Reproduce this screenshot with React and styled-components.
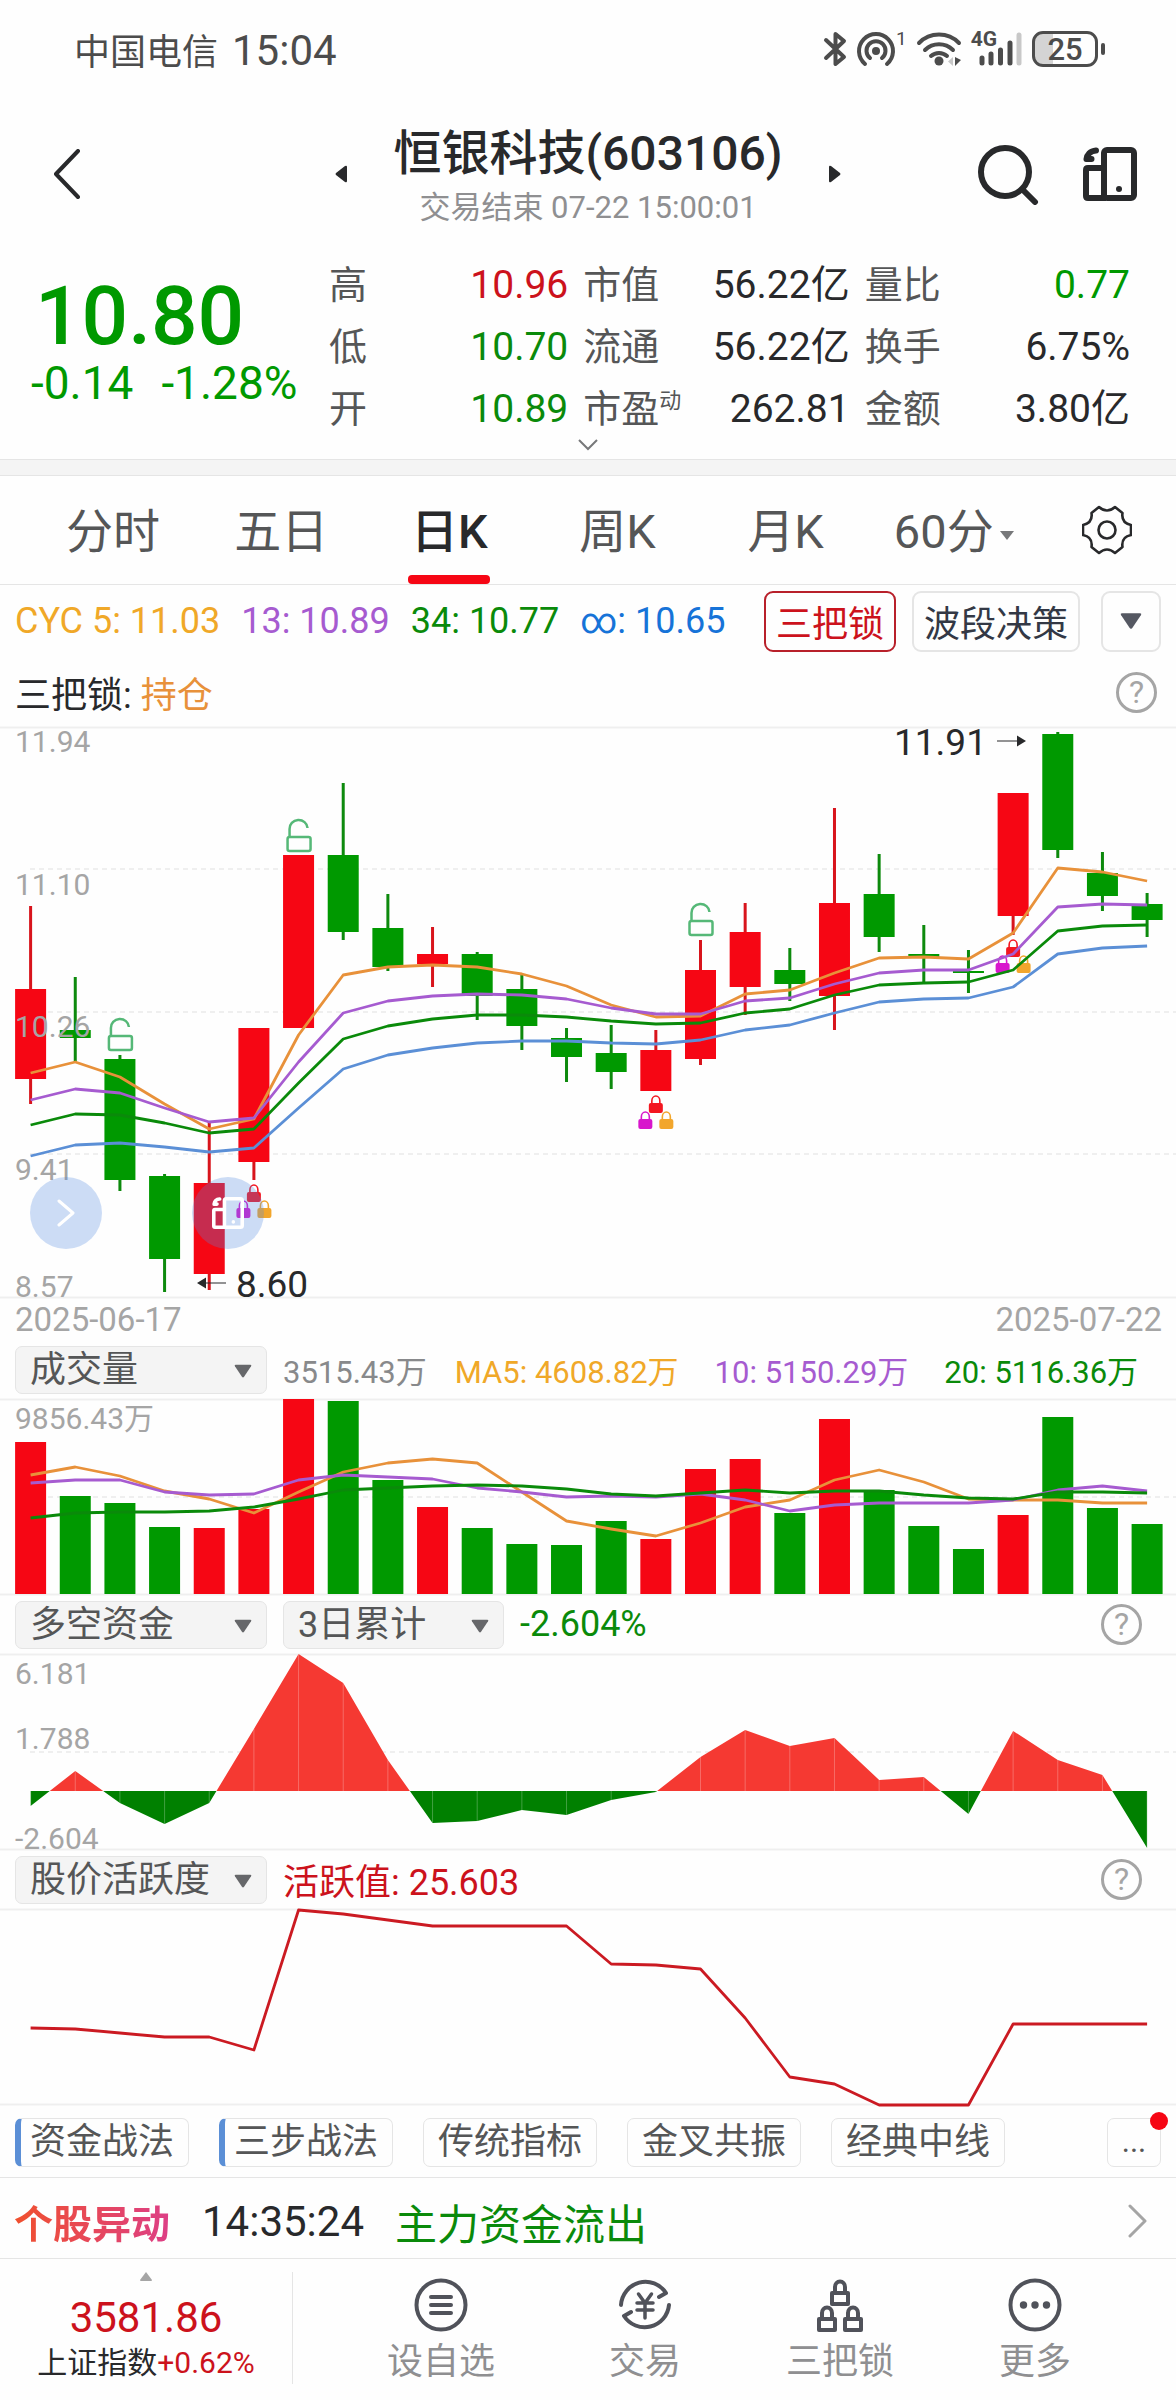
import React from 'react';
import styled, { createGlobalStyle } from 'styled-components';

const RED = '#f60614';
const GREEN = '#009900';
const DARK_RED = '#cc121c';
const DARK_GREEN = '#0a8a0a';
const ORANGE = '#e8913a';
const AMBER = '#f0a828';
const PURPLE = '#a65bd0';
const BLUE = '#5b8fd6';
const INK = '#28292b';
const GREY = '#555657';
const LIGHT = '#a5a5a5';
const LINE = '#e5e5e5';

const GlobalStyle = createGlobalStyle`
  * {
    box-sizing: border-box;
  }
  body {
    margin: 0;
    background: #fefefe;
    color: ${INK};
    font-family: Roboto, 'Noto Sans CJK SC', sans-serif;
  }
  button, select {
    margin: 0;
    padding: 0;
    border: none;
    background: none;
    color: inherit;
    font: inherit;
    cursor: pointer;
  }
  a {
    color: inherit;
    text-decoration: none;
  }
  svg {
    display: block;
    flex-shrink: 0;
  }
`;

const Page = styled.div`
  width: 100%;
  overflow: hidden;
  white-space: nowrap;
`;

/* status bar */

const StatusBar = styled.div`
  display: flex;
  align-items: center;
  justify-content: space-between;
  height: 100px;
  padding: 0 71px 2px 74px;
  color: #4c4c4c;
`;

const Carrier = styled.div`
  display: flex;
  align-items: baseline;
  gap: 14px;
  font-size: 36px;
`;

const Clock = styled.span`
  font-size: 42px;
`;

const StatusIcons = styled.div`
  display: flex;
  align-items: center;
  gap: 9px;
`;

const IconGroup = styled.div`
  display: flex;
  align-items: flex-start;
`;

const TinyText = styled.span`
  font-size: ${(p) => p.$size}px;
  line-height: 16px;
  font-weight: ${(p) => p.$weight || 400};
`;

const Battery = styled.div`
  display: flex;
  align-items: center;
  gap: 3px;
`;

const BatteryBody = styled.div`
  width: 66px;
  height: 36px;
  border: 3px solid #4c4c4c;
  border-radius: 11px;
  background: linear-gradient(90deg, #d4d4d4 18px, transparent 18px);
  font-size: 31px;
  font-weight: 500;
  line-height: 31px;
  text-align: center;
`;

const BatteryTip = styled.div`
  width: 4px;
  height: 12px;
  border-radius: 2px;
  background: #4c4c4c;
`;

/* title bar */

const Header = styled.header`
  display: grid;
  grid-template-columns: 1fr auto 1fr;
  align-items: center;
  height: 148px;
  padding: 0 39px 0 53px;
`;

const IconButton = styled.button`
  display: flex;
  align-items: center;
`;

const StockPicker = styled.div`
  display: flex;
  align-items: center;
  gap: 45px;
  margin-left: -14px;
`;

const StockTitle = styled.div`
  padding-top: 2px;
  text-align: center;
`;

const StockName = styled.h1`
  margin: 0;
  font-size: 48px;
  font-weight: 500;
  line-height: 62px;
`;

const StockState = styled.p`
  margin: 0;
  padding-top: 3px;
  color: #8f8f91;
  font-size: 31px;
  line-height: 40px;
`;

const HeaderActions = styled.div`
  display: flex;
  align-items: center;
  justify-content: flex-end;
  gap: 44px;
`;

/* quote */

const Quote = styled.section`
  display: flex;
  height: 190px;
  padding: 4px 46px 0 31px;
`;

const PriceBlock = styled.div`
  flex: 0 0 298px;
  padding-top: 22px;
  color: ${GREEN};
`;

const Price = styled.div`
  padding-left: 4px;
  font-size: 82px;
  font-weight: 500;
  line-height: 84px;
`;

const Change = styled.div`
  display: flex;
  gap: 28px;
  font-size: 46px;
  line-height: 50px;
`;

const QuoteGrid = styled.dl`
  display: grid;
  flex: 1;
  grid-template-columns: 239fr 266fr 265fr;
  grid-auto-rows: 62px;
  column-gap: 15px;
  margin: 0;
  padding-top: 2px;
`;

const QuoteItem = styled.div`
  display: flex;
  align-items: center;
  justify-content: space-between;
  font-size: 38px;
  line-height: 62px;

  dt {
    color: ${GREY};
  }
  dd {
    margin: 0;
    color: ${(p) => p.$color || INK};
    font-size: 39px;
  }
  sup {
    font-size: 22px;
    line-height: 22px;
    vertical-align: 14px;
  }
`;

const ExpandButton = styled.button`
  display: flex;
  justify-content: center;
  width: 100%;
  height: 21px;
`;

const Band = styled.div`
  height: 17px;
  border: solid ${LINE};
  border-width: 1px 0;
  background: #f4f4f4;
`;

/* period tabs */

const Tabs = styled.nav`
  display: flex;
  align-items: stretch;
  height: 109px;
  padding: 0 0 0 29px;
  border-bottom: 1px solid ${LINE};
`;

const Tab = styled.button`
  position: relative;
  flex: 168;
  padding-bottom: 5px;
  color: ${(p) => (p.$active ? INK : GREY)};
  font-size: 47px;
  font-weight: ${(p) => (p.$active ? 500 : 400)};

  &::after {
    content: '';
    display: ${(p) => (p.$active ? 'block' : 'none')};
    position: absolute;
    bottom: 0;
    left: calc(50% - 41px);
    width: 82px;
    height: 9px;
    border-radius: 4px;
    background: ${RED};
  }
`;

const TabCaret = styled.span`
  display: inline-block;
  margin-left: 6px;
  border: 7px solid transparent;
  border-top: 9px solid #77787a;
  border-bottom: 0;
  vertical-align: 8px;
`;

const Settings = styled.button`
  display: flex;
  flex: 138;
  align-items: center;
  justify-content: center;
`;

/* main indicator rows */

const Row = styled.div`
  display: flex;
  align-items: center;
  height: ${(p) => p.$height}px;
  padding: 0 ${(p) => p.$right}px 0 15px;
  font-size: 36px;
`;

const Legend = styled.div`
  display: flex;
  flex: 1;
  gap: 21px;
`;

const Tinted = styled.span`
  color: ${(p) => p.$color};
`;

const StrategyButton = styled.button`
  height: 61px;
  margin-left: 16px;
  padding: 0 10px;
  border: 2px solid ${(p) => (p.$active ? '#b8202a' : LINE)};
  border-radius: 9px;
  color: ${(p) => (p.$active ? DARK_RED : '#333845')};
`;

const CaretButton = styled.button`
  display: flex;
  align-items: center;
  justify-content: center;
  width: 60px;
  height: 61px;
  margin-left: 21px;
  border: 2px solid ${LINE};
  border-radius: 9px;
`;

const HelpButton = styled.button`
  width: 41px;
  height: 41px;
  margin-left: auto;
  border: 3px solid ${LIGHT};
  border-radius: 50%;
  color: ${LIGHT};
  font-size: 32px;
  line-height: 35px;
`;

/* charts */

const ChartBox = styled.div`
  position: relative;

  > svg {
    width: 100%;
    height: auto;
    overflow: visible;
  }
`;

const FloatingButton = styled.button`
  position: absolute;
  top: 450px;
  left: ${(p) => p.$left}px;
  display: flex;
  align-items: center;
  justify-content: center;
  width: 72px;
  height: 72px;
  border-radius: 50%;
  background: rgba(83, 138, 224, 0.29);
`;

const DateRow = styled.div`
  display: flex;
  align-items: center;
  justify-content: space-between;
  height: 42px;
  padding: 0 14px 0 15px;
  color: ${LIGHT};
  font-size: 33px;
`;

const PanelHeader = styled.div`
  display: flex;
  align-items: center;
  gap: 16px;
  height: 59px;
  padding: 0 34px 0 15px;
  font-size: 36px;
`;

const SelectWrap = styled.div`
  position: relative;
  flex: 0 0 ${(p) => p.$width}px;

  svg {
    position: absolute;
    top: 16px;
    right: 15px;
    pointer-events: none;
  }
`;

const Select = styled.select`
  width: 100%;
  height: 48px;
  padding: 0 14px;
  appearance: none;
  border: 1px solid ${LINE};
  border-radius: 7px;
  background: #f4f4f4;
  color: ${GREY};
  line-height: 46px;
`;

const PanelValue = styled(Tinted)`
  padding-bottom: 2px;
`;

const VolumeLegend = styled.div`
  display: flex;
  gap: 36px;
  font-size: 31px;

  span:first-child {
    margin-right: -8px;
  }
`;

/* chips, alert, bottom bar */

const ChipRow = styled.div`
  display: flex;
  align-items: center;
  gap: 30px;
  height: 71px;
  padding: 0 15px;
  border-bottom: 1px solid ${LINE};
`;

const Chip = styled.button`
  flex: 0 0 174px;
  height: 49px;
  border: 1px solid ${LINE};
  border-left: ${(p) => (p.$marked ? `6px solid ${BLUE}` : `1px solid ${LINE}`)};
  border-radius: 7px;
  padding-right: ${(p) => (p.$marked ? 5 : 0)}px;
  color: ${GREY};
  font-size: 36px;
  line-height: 46px;
`;

const MoreChip = styled(Chip)`
  position: relative;
  flex: 0 0 54px;
  margin-left: auto;
  font-size: 31px;

  &::after {
    content: '';
    position: absolute;
    top: -7px;
    right: -8px;
    width: 18px;
    height: 18px;
    border-radius: 50%;
    background: ${RED};
  }
`;

const Alert = styled.a`
  display: flex;
  align-items: center;
  height: 81px;
  padding: 6px 28px 0 14px;
  border-bottom: 1px solid ${LINE};
  font-size: 42px;

  svg {
    margin-left: auto;
  }
`;

const AlertBadge = styled.strong`
  background: linear-gradient(90deg, #f0502e, #dd3f86);
  background-clip: text;
  color: transparent;
  font-size: 39px;
`;

const AlertTime = styled.time`
  margin: 0 31px 0 32px;
`;

const BottomBar = styled.footer`
  display: flex;
  height: 141px;
`;

const IndexBox = styled.a`
  display: flex;
  flex: 0 0 293px;
  flex-direction: column;
  align-items: center;
  height: 112px;
  margin-top: 13px;
  border-right: 1px solid ${LINE};
  font-size: 30px;
  line-height: 36px;

  svg {
    margin-bottom: 12px;
  }
`;

const IndexValue = styled.span`
  color: ${DARK_RED};
  font-size: 42px;
  line-height: 50px;
  margin-bottom: 2px;
`;

const Actions = styled.nav`
  display: grid;
  flex: 1;
  grid-template-columns: 216fr 192fr 198fr 192fr;
  padding: 19px 45px 0 40px;
`;

const Action = styled.a`
  display: flex;
  flex-direction: column;
  align-items: center;
  gap: 8px;
  color: #8f8f91;
  font-size: 36px;
  line-height: 44px;
`;

/* data: one entry per trading day, y values in chart units */

const STEP = 44.66;
const dayX = (i) => 30.6 + i * STEP;

const CANDLES = [
  ['r', 179, 262, 352, 377],
  ['g', 250, 303, 311, 336],
  ['g', 328, 332, 453, 464],
  ['g', 447, 449, 532, 565],
  ['r', 395, 456, 547, 563],
  ['r', 301, 301, 435, 453],
  ['r', 128, 128, 301, 301],
  ['g', 56, 128, 205, 213],
  ['g', 167, 201, 240, 244],
  ['r', 200, 227, 237, 260],
  ['g', 225, 227, 269, 293],
  ['g', 248, 262, 299, 323],
  ['g', 301, 311, 330, 355],
  ['g', 298, 326, 345, 362],
  ['r', 303, 323, 364, 364],
  ['r', 213, 243, 332, 338],
  ['r', 176, 205, 260, 288],
  ['g', 221, 243, 257, 274],
  ['r', 81, 176, 269, 303],
  ['g', 127, 167, 210, 225],
  ['g', 198, 227, 230, 256],
  ['g', 223, 244, 246, 266],
  ['r', 66, 66, 189, 208],
  ['g', 5, 7, 123, 131],
  ['g', 125, 146, 169, 184],
  ['g', 166, 177, 193, 210],
];

const COST_LINES = [
  [ORANGE, [346, 335, 350, 377, 402, 392, 308, 248, 240, 238, 240, 247, 259, 278, 290, 289, 267, 263, 246, 231, 230, 232, 206, 141, 145, 154]],
  [PURPLE, [373, 362, 366, 381, 395, 391, 335, 286, 274, 269, 267, 268, 272, 281, 287, 287, 274, 271, 257, 246, 243, 243, 227, 180, 177, 178]],
  [DARK_GREEN, [398, 387, 388, 396, 406, 402, 356, 312, 299, 292, 288, 288, 290, 294, 297, 296, 286, 282, 268, 258, 256, 255, 243, 204, 199, 198]],
  [BLUE, [429, 418, 416, 420, 425, 421, 381, 342, 328, 321, 316, 314, 314, 316, 317, 313, 303, 298, 286, 275, 272, 271, 260, 227, 221, 219]],
];

const VOLUMES = [43, 97, 104, 128, 129, 110, 0, 2, 81, 108, 129, 145, 146, 122, 140, 70, 60, 114, 20, 91, 127, 150, 116, 18, 109, 125];

const VOLUME_LINES = [
  [ORANGE, [76, 68, 77, 92, 100, 114, 93, 73, 64, 60, 64, 93, 122, 130, 137, 124, 108, 101, 81, 71, 83, 100, 101, 101, 104, 104]],
  [PURPLE, [84, 81, 81, 93, 96, 95, 81, 76, 78, 80, 89, 93, 98, 97, 98, 95, 101, 112, 106, 104, 104, 104, 101, 91, 87, 92]],
  [DARK_GREEN, [119, 114, 113, 113, 112, 108, 100, 91, 89, 87, 86, 87, 90, 95, 97, 94, 91, 94, 92, 92, 96, 99, 100, 93, 93, 94]],
];

const FUNDS = [152, 117, 149, 170, 149, 75, 0, 29, 106, 169, 167, 156, 161, 146, 138, 103, 76, 92, 84, 126, 123, 160, 77, 106, 121, 194];
const FUND_ZERO = 137;

const ACTIVITY = [119, 120, 124, 128, 128, 141, 1, 5, 11, 17, 17, 17, 17, 55, 56, 60, 109, 168, 175, 196, 196, 196, 115, 115, 115, 115];

const QUOTES = [
  ['高', '10.96', DARK_RED],
  ['市值', '56.22亿'],
  ['量比', '0.77', GREEN],
  ['低', '10.70', DARK_GREEN],
  ['流通', '56.22亿'],
  ['换手', '6.75%'],
  ['开', '10.89', DARK_GREEN],
  ['市盈', '262.81', null, '动'],
  ['金额', '3.80亿'],
];

const toPoints = (values) => values.map((v, i) => `${dayX(i)},${v}`).join(' ');

function Curve({ color, values }) {
  return <polyline points={toPoints(values)} fill="none" stroke={color} strokeWidth="2.800" strokeLinejoin="round" />;
}

function Frame({ height, dashes }) {
  return (
    <>
      <path d={`M0 0.5H1176M0 ${height - 0.5}H1176`} stroke="#efefef" strokeWidth="2" />
      {dashes.map((y) => (
        <path key={y} d={`M30 ${y}H1176`} stroke="#efefef" strokeWidth="2" strokeDasharray="5 4" />
      ))}
    </>
  );
}

function AxisLabel({ y, children }) {
  return (
    <text x="15" y={y} fill={LIGHT} fontSize="30">
      {children}
    </text>
  );
}

function OpenLock({ day, y }) {
  return (
    <g transform={`translate(${dayX(day) - 12} ${y})`} fill="none" stroke="#55b877" strokeWidth="2.500">
      <rect x="1" y="18" width="23" height="14" rx="2" />
      <path d="M3 18V10a9 8.500 0 0 1 18-1" />
    </g>
  );
}

function MiniLock({ x, y, color }) {
  return (
    <g transform={`translate(${x - 7} ${y})`}>
      <path d="M3 9V6a4 5 0 0 1 8 0v3" fill="none" stroke={color} strokeWidth="1.600" />
      <rect x="0" y="8" width="14" height="10" rx="2" fill={color} />
    </g>
  );
}

function LockTrio({ day, y }) {
  const x = dayX(day);
  return (
    <>
      <MiniLock x={x} y={y} color="#f31620" />
      <MiniLock x={x - 10.5} y={y + 16} color="#d816cc" />
      <MiniLock x={x + 10.5} y={y + 16} color="#f2a62c" />
    </>
  );
}

function PriceChart() {
  return (
    <svg viewBox="0 0 1176 571" role="img" aria-label="日K">
      <Frame height={571} dashes={[142, 285, 427]} />
      {CANDLES.map(([kind, high, top, bottom, low], i) => (
        <g key={i} fill={kind === 'r' ? RED : GREEN}>
          <rect x={dayX(i) - 1.5} y={high} width="3" height={low - high} fill={kind === 'r' ? '#d8141c' : '#0d8a0d'} />
          <rect x={dayX(i) - 15.5} y={top} width="31" height={bottom - top} />
        </g>
      ))}
      <LockTrio day={5} y={457} />
      <LockTrio day={14} y={368} />
      <LockTrio day={22} y={212} />
      {COST_LINES.map(([color, values]) => (
        <Curve key={color} color={color} values={values} />
      ))}
      <OpenLock day={2} y={291} />
      <OpenLock day={6} y={92} />
      <OpenLock day={15} y={176} />
      <AxisLabel y={25}>11.94</AxisLabel>
      <AxisLabel y={168}>11.10</AxisLabel>
      <AxisLabel y={310}>10.26</AxisLabel>
      <AxisLabel y={453}>9.41</AxisLabel>
      <AxisLabel y={570}>8.57</AxisLabel>
      <g fill={INK} fontSize="37">
        <text x="894" y="28">11.91</text>
        <text x="236" y="570">8.60</text>
        <path d="M997 13.500h20v-5l9 5.500-9 5.500v-5h-20z" />
        <path d="M226 555.500h-20v-5l-9 5.500 9 5.500v-5h20z" />
      </g>
    </svg>
  );
}

function VolumeChart() {
  return (
    <svg viewBox="0 0 1176 196" role="img" aria-label="成交量">
      <Frame height={196} dashes={[98]} />
      {VOLUMES.map((y, i) => (
        <rect key={i} x={dayX(i) - 15.5} y={y} width="31" height={195 - y} fill={CANDLES[i][0] === 'r' ? RED : GREEN} />
      ))}
      {VOLUME_LINES.map(([color, values]) => (
        <Curve key={color} color={color} values={values} />
      ))}
      <AxisLabel y={30}>9856.43万</AxisLabel>
    </svg>
  );
}

function FundChart() {
  const area = `${dayX(0)},${FUND_ZERO} ${toPoints(FUNDS)} ${dayX(25)},${FUND_ZERO}`;
  return (
    <svg viewBox="0 0 1176 196" role="img" aria-label="多空资金">
      <clipPath id="above">
        <rect width="1176" height={FUND_ZERO} />
      </clipPath>
      <clipPath id="below">
        <rect y={FUND_ZERO} width="1176" height="59" />
      </clipPath>
      <Frame height={196} dashes={[98]} />
      <polygon points={area} fill="#f53932" clipPath="url(#above)" />
      <polygon points={area} fill="#008000" clipPath="url(#below)" />
      {FUNDS.map((y, i) => (
        <path key={i} d={`M${dayX(i)} ${y}V${FUND_ZERO}`} stroke="#fff" strokeOpacity="0.25" />
      ))}
      <AxisLabel y={30}>6.181</AxisLabel>
      <AxisLabel y={95}>1.788</AxisLabel>
      <AxisLabel y={195}>-2.604</AxisLabel>
    </svg>
  );
}

function ActivityChart() {
  return (
    <svg viewBox="0 0 1176 198" role="img" aria-label="股价活跃度">
      <Frame height={196} dashes={[]} />
      <Curve color="#cb1a22" values={ACTIVITY} />
    </svg>
  );
}

function Caret({ size = 18, color = '#66676a' }) {
  return (
    <svg width={size} height={size} viewBox="0 0 17 14" fill={color}>
      <path d="M1.500 1h14q1.500 0 .6 1.500L9.500 12.500q-1 1.200-2 0L.9 2.500Q0 1 1.500 1z" />
    </svg>
  );
}

function DeviceIcon({ size, stroke, color }) {
  return (
    <svg width={size} height={size} viewBox="0 0 54 54" fill="none" stroke={color} strokeWidth={stroke}>
      <rect x="21" y="3" width="30" height="48" rx="3" />
      <path d="M21 21H5q-2 0-2 2v26q0 2 2 2h18" />
      <path d="M13 3.500C7 4 4 8 3.500 12h5" strokeWidth="6" strokeLinecap="round" strokeLinejoin="round" />
      <circle cx="36" cy="42" r="3" fill={color} stroke="none" />
    </svg>
  );
}

function PanelSelect({ label, width, value }) {
  return (
    <SelectWrap $width={width}>
      <Select aria-label={label} defaultValue={value}>
        <option>{value}</option>
      </Select>
      <Caret />
    </SelectWrap>
  );
}

function NavIcon({ children }) {
  return (
    <svg width="54" height="54" viewBox="0 0 54 54" fill="none" stroke="#50525a" strokeWidth="4" strokeLinecap="round" strokeLinejoin="round">
      {children}
    </svg>
  );
}

function App() {
  return (
    <Page>
      <GlobalStyle />
      <StatusBar>
        <Carrier>
          中国电信<Clock>15:04</Clock>
        </Carrier>
        <StatusIcons>
          <svg width="24" height="36" viewBox="0 0 24 36" fill="none" stroke="#4c4c4c" strokeWidth="4" strokeLinecap="round" strokeLinejoin="round">
            <path d="M3 9l18 17-8.500 7V3L21 10 3 27" />
          </svg>
          <IconGroup>
            <svg width="40" height="36" viewBox="0 0 40 36" fill="none" stroke="#4c4c4c" strokeWidth="4" strokeLinecap="round">
              <path d="M9 33a17 17 0 1 1 22 0" />
              <path d="M14 27a9.500 9.500 0 1 1 12 0" />
              <circle cx="20" cy="20" r="4" fill="#4c4c4c" stroke="none" />
            </svg>
            <TinyText $size={19}>1</TinyText>
          </IconGroup>
          <svg width="46" height="36" viewBox="0 0 46 36" fill="none" stroke="#4c4c4c" strokeWidth="4" strokeLinecap="round">
            <path d="M3 12a28 28 0 0 1 40 0M9 19a20 20 0 0 1 28 0M15 25a12 12 0 0 1 16 0" />
            <circle cx="23" cy="30" r="4.500" fill="#4c4c4c" stroke="none" />
            <path d="M37 26v9l-5-4.500z" fill="#c8c8c8" stroke="none" />
            <path d="M39 26v9l6-6z" fill="#4c4c4c" stroke="none" />
          </svg>
          <IconGroup>
            <TinyText $size={21} $weight={700}>4G</TinyText>
            <svg width="26" height="36" viewBox="16 0 26 36" fill="none" stroke="#4c4c4c" strokeWidth="5" strokeLinecap="round" overflow="visible">
              <path d="M1 27v5M10 23v9M19.500 19v13M29 12v20" />
              <path d="M38 4v28" stroke="#c8c8c8" />
            </svg>
          </IconGroup>
          <Battery>
            <BatteryBody>25</BatteryBody>
            <BatteryTip />
          </Battery>
        </StatusIcons>
      </StatusBar>

      <Header>
        <IconButton aria-label="返回">
          <svg width="28" height="50" viewBox="0 0 28 50" fill="none" stroke={INK} strokeWidth="4" strokeLinecap="round" strokeLinejoin="round">
            <path d="M25 2L3 25l22 23" />
          </svg>
        </IconButton>
        <StockPicker>
          <IconButton aria-label="上一只">
            <svg width="13" height="18" viewBox="0 0 13 18" fill={INK}>
              <path d="M12 2v14q0 2-2 1L1 10q-1-1 0-2l9-7q2-1 2 1z" />
            </svg>
          </IconButton>
          <StockTitle>
            <StockName>恒银科技(603106)</StockName>
            <StockState>交易结束 07-22 15:00:01</StockState>
          </StockTitle>
          <IconButton aria-label="下一只">
            <svg width="13" height="18" viewBox="0 0 13 18" fill={INK}>
              <path d="M1 2v14q0 2 2 1l9-7q1-1 0-2L3 1Q1 0 1 2z" />
            </svg>
          </IconButton>
        </StockPicker>
        <HeaderActions>
          <IconButton aria-label="搜索">
            <svg width="61" height="61" viewBox="0 0 61 61" fill="none" stroke={INK} strokeWidth="6" strokeLinecap="round">
              <circle cx="27" cy="28" r="24" />
              <path d="M45 46l12 12" />
            </svg>
          </IconButton>
          <IconButton aria-label="切换布局">
            <DeviceIcon size={54} stroke={6} color={INK} />
          </IconButton>
        </HeaderActions>
      </Header>

      <Quote>
        <PriceBlock>
          <Price>10.80</Price>
          <Change>
            <span>-0.14</span>
            <span>-1.28%</span>
          </Change>
        </PriceBlock>
        <QuoteGrid>
          {QUOTES.map(([name, value, color, note]) => (
            <QuoteItem key={name} $color={color}>
              <dt>
                {name}
                {note && <sup>{note}</sup>}
              </dt>
              <dd>{value}</dd>
            </QuoteItem>
          ))}
        </QuoteGrid>
      </Quote>
      <ExpandButton aria-label="展开">
        <svg width="22" height="14" viewBox="0 0 22 14" fill="none" stroke="#77787a" strokeWidth="2">
          <path d="M2 2l9 9 9-9" />
        </svg>
      </ExpandButton>
      <Band />

      <Tabs>
        <Tab>分时</Tab>
        <Tab>五日</Tab>
        <Tab $active>日K</Tab>
        <Tab>周K</Tab>
        <Tab>月K</Tab>
        <Tab>
          60分
          <TabCaret />
        </Tab>
        <Settings aria-label="设置">
          <svg width="50" height="50" viewBox="-1 -1 50 50" fill="none" stroke={INK} strokeWidth="2.600" strokeLinejoin="round">
            <path d="M16 1Q24 8 32 1L39.500 7Q38 17 48 19V29Q38 31 39.500 41L32 47Q24 40 16 47L8.500 41Q10 31 0 29V19Q10 17 8.500 7Z" />
            <circle cx="24" cy="24" r="8.500" />
          </svg>
        </Settings>
      </Tabs>

      <Row $height={72} $right={15}>
        <Legend>
          <Tinted $color={AMBER}>CYC 5: 11.03</Tinted>
          <Tinted $color={PURPLE}>13: 10.89</Tinted>
          <Tinted $color={DARK_GREEN}>34: 10.77</Tinted>
          <Tinted $color="#1673d8">∞: 10.65</Tinted>
        </Legend>
        <StrategyButton $active>三把锁</StrategyButton>
        <StrategyButton>波段决策</StrategyButton>
        <CaretButton aria-label="更多指标">
          <Caret size={22} color="#555862" />
        </CaretButton>
      </Row>
      <Row $height={70} $right={19}>
        <span>
          三把锁: <Tinted $color={ORANGE}>持仓</Tinted>
        </span>
        <HelpButton aria-label="三把锁说明">?</HelpButton>
      </Row>

      <ChartBox>
        <PriceChart />
        <FloatingButton $left={30} aria-label="下一页">
          <svg width="18" height="28" viewBox="0 0 18 28" fill="none" stroke="#fff" strokeWidth="3" strokeLinecap="round" strokeLinejoin="round">
            <path d="M2 2l14 12L2 26" />
          </svg>
        </FloatingButton>
        <FloatingButton $left={192} aria-label="横屏">
          <DeviceIcon size={32} stroke={6} color="#fff" />
        </FloatingButton>
      </ChartBox>
      <DateRow>
        <time>2025-06-17</time>
        <time>2025-07-22</time>
      </DateRow>

      <PanelHeader>
        <PanelSelect label="副图一" width={252} value="成交量" />
        <VolumeLegend>
          <Tinted $color="#88898b">3515.43万</Tinted>
          <Tinted $color={AMBER}>MA5: 4608.82万</Tinted>
          <Tinted $color={PURPLE}>10: 5150.29万</Tinted>
          <Tinted $color={DARK_GREEN}>20: 5116.36万</Tinted>
        </VolumeLegend>
      </PanelHeader>
      <ChartBox>
        <VolumeChart />
      </ChartBox>

      <PanelHeader>
        <PanelSelect label="副图二" width={252} value="多空资金" />
        <PanelSelect label="周期" width={221} value="3日累计" />
        <PanelValue $color={DARK_GREEN}>-2.604%</PanelValue>
        <HelpButton aria-label="多空资金说明">?</HelpButton>
      </PanelHeader>
      <ChartBox>
        <FundChart />
      </ChartBox>

      <PanelHeader>
        <PanelSelect label="副图三" width={252} value="股价活跃度" />
        <PanelValue $color={DARK_RED}>活跃值: 25.603</PanelValue>
        <HelpButton aria-label="股价活跃度说明">?</HelpButton>
      </PanelHeader>
      <ChartBox>
        <ActivityChart />
      </ChartBox>

      <ChipRow>
        <Chip $marked>资金战法</Chip>
        <Chip $marked>三步战法</Chip>
        <Chip>传统指标</Chip>
        <Chip>金叉共振</Chip>
        <Chip>经典中线</Chip>
        <MoreChip>...</MoreChip>
      </ChipRow>

      <Alert href="#alerts">
        <AlertBadge>个股异动</AlertBadge>
        <AlertTime>14:35:24</AlertTime>
        <Tinted $color={DARK_GREEN}>主力资金流出</Tinted>
        <svg width="20" height="34" viewBox="0 0 20 34" fill="none" stroke={LIGHT} strokeWidth="3" strokeLinecap="round" strokeLinejoin="round">
          <path d="M2 2l15 15L2 32" />
        </svg>
      </Alert>

      <BottomBar>
        <IndexBox href="#index">
          <svg width="14" height="9" viewBox="0 0 14 9" fill={LIGHT}>
            <path d="M7 0l6 8q0 1-1 1H2Q1 9 1 8z" />
          </svg>
          <IndexValue>3581.86</IndexValue>
          <span>
            上证指数<Tinted $color={DARK_RED}>+0.62%</Tinted>
          </span>
        </IndexBox>
        <Actions>
          <Action href="#watch">
            <NavIcon>
              <circle cx="27" cy="27" r="24.500" />
              <path d="M17 19h20M17 27h20M17 35h20" />
            </NavIcon>
            设自选
          </Action>
          <Action href="#trade">
            <NavIcon>
              <path d="M3 27A24.500 24.500 0 0 1 48 15l-7 4M51 27A24.500 24.500 0 0 1 6 38l7-4" />
              <path d="M20.500 16l6.500 9 6.500-9M27 25v15M19 25h16M19 32h16" strokeWidth="3.500" />
            </NavIcon>
            交易
          </Action>
          <Action href="#locks">
            <NavIcon>
              <path d="M19 15h16v11H19zM22 15V9a5 5.500 0 0 1 10 0v6" />
              <path d="M6 41h16v11H6zM9 41v-6a5 5.500 0 0 1 10 0v6" />
              <path d="M32 41h16v11H32zM35 41v-6a5 5.500 0 0 1 10 0v6" />
            </NavIcon>
            三把锁
          </Action>
          <Action href="#more">
            <NavIcon>
              <circle cx="27" cy="27" r="24.500" />
              <g fill="#50525a" stroke="none">
                <circle cx="15.500" cy="27" r="3.700" />
                <circle cx="27" cy="27" r="3.700" />
                <circle cx="38.500" cy="27" r="3.700" />
              </g>
            </NavIcon>
            更多
          </Action>
        </Actions>
      </BottomBar>
    </Page>
  );
}

export default App;
